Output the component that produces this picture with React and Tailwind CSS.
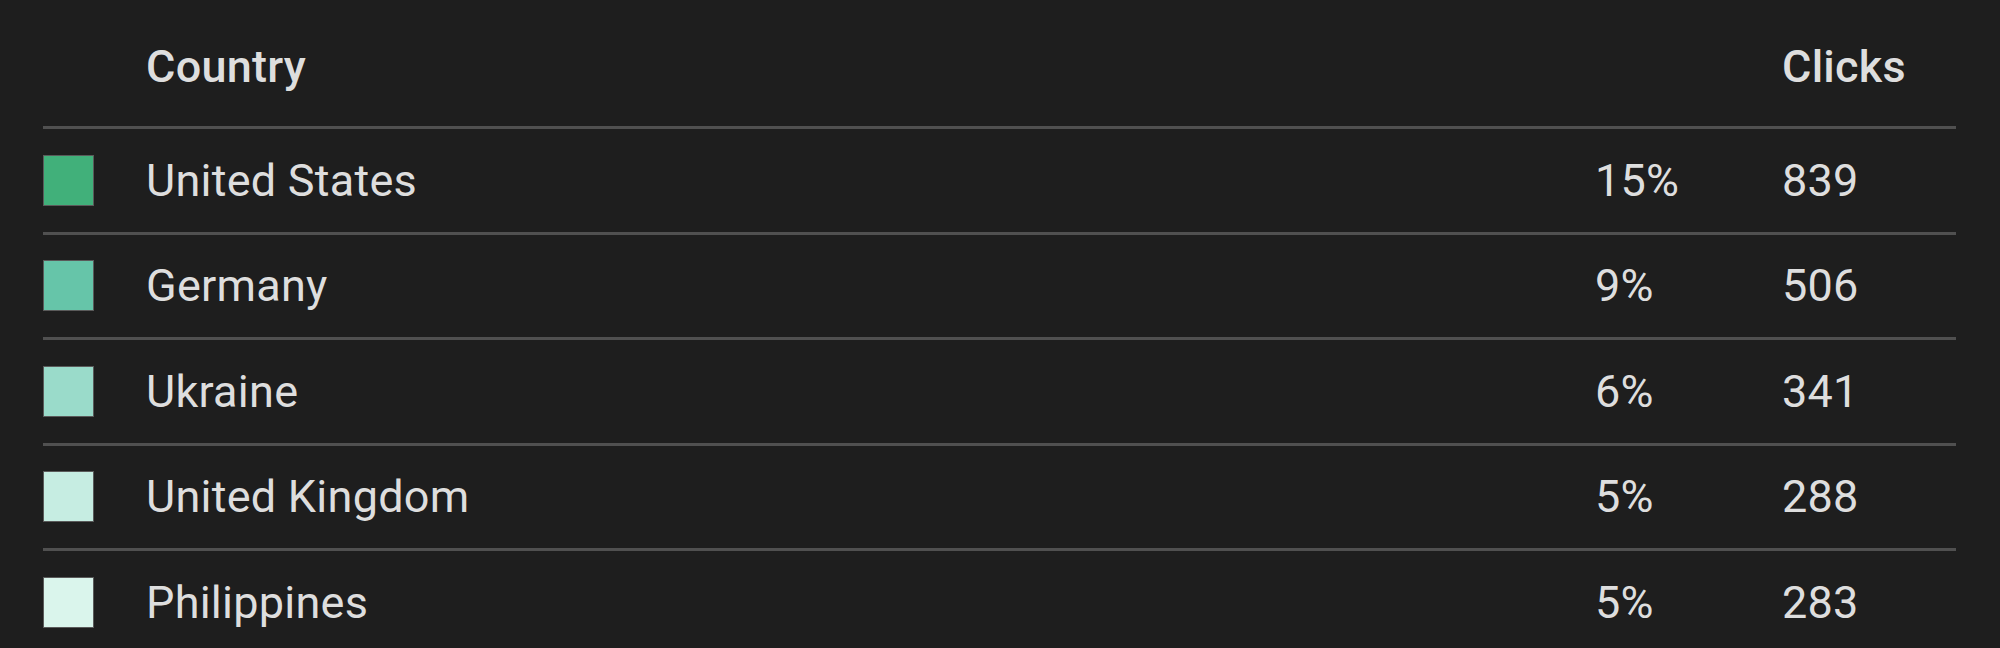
import React from 'react';

const rows = [
    { country: 'United States', share: '15%', clicks: 839, color: 'bg-[#41b07a]' },
    { country: 'Germany', share: '9%', clicks: 506, color: 'bg-[#66c5a9]' },
    { country: 'Ukraine', share: '6%', clicks: 341, color: 'bg-[#9adbca]' },
    { country: 'United Kingdom', share: '5%', clicks: 288, color: 'bg-[#c6ede2]' },
    { country: 'Philippines', share: '5%', clicks: 283, color: 'bg-[#daf5ec]' },
];

const App = () => {
    return (
        <div className="w-[2000px] h-[648px] overflow-hidden bg-[#1e1e1e] text-[#dedede] font-['Roboto',sans-serif] text-[45px] tracking-[0.25px] pl-[43px]">
            <div className="w-[1913px]">
                <div className="flex items-center h-[126px] pt-2 font-medium">
                    <div className="w-[103px]" />
                    <div className="flex-1">Country</div>
                    <div className="w-[187px]" />
                    <div className="w-[174px]">Clicks</div>
                </div>

                {rows.map(row => (
                    <div key={row.country} className="flex items-center h-[105.5px] border-t-[3px] border-[#505050]">
                        <div className="w-[103px]">
                            <div className={`w-[51px] h-[51px] border border-[#5a5a5a] ${row.color}`} />
                        </div>
                        <div className="flex-1">{row.country}</div>
                        <div className="w-[187px]">{row.share}</div>
                        <div className="w-[174px]">{row.clicks}</div>
                    </div>
                ))}
            </div>
        </div>
    );
};

export default App;
